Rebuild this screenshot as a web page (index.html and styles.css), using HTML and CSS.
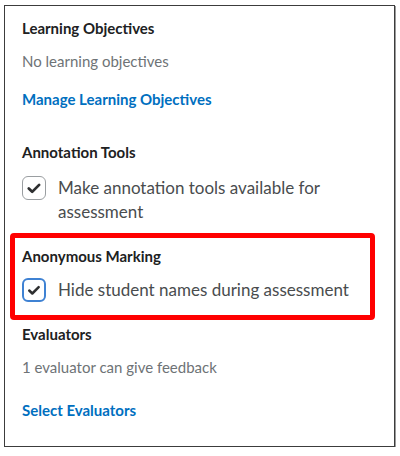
FILE: index.html
```html
<!DOCTYPE html>
<html lang="en">
<head>
  <meta charset="UTF-8" />
  <meta name="viewport" content="width=device-width,initial-scale=1" />
  <title>Assignment Evaluation</title>
  <link rel="stylesheet" href="styles.css">
</head>
<body>

  <div class="panel">
    <section class="group">
      <h2>Learning Objectives</h2>
      <p class="muted">No learning objectives</p>
      <a class="link link-first" href="#">Manage Learning Objectives</a>
    </section>

    <section class="group group-annotation">
      <h2>Annotation Tools</h2>
      <label class="check">
        <span class="box">
          <svg viewBox="0 0 24 24" width="24" height="24"><path d="M6.3 12.6 L10 16.2 L17.6 8.6" /></svg>
        </span>
        <span class="check-text">Make annotation tools available for assessment</span>
      </label>
    </section>

    <section class="group highlight">
      <h2>Anonymous Marking</h2>
      <label class="check">
        <span class="box box-focus">
          <svg viewBox="0 0 24 24" width="24" height="24"><path d="M6.3 12.6 L10 16.2 L17.6 8.6" /></svg>
        </span>
        <span class="check-text">Hide student names during assessment</span>
      </label>
    </section>

    <section class="group group-evaluators">
      <h2>Evaluators</h2>
      <p class="muted">1 evaluator can give feedback</p>
      <a class="link link-last" href="#">Select Evaluators</a>
    </section>
  </div>

</body>
</html>
```

FILE: styles.css
```css
body {
  font-family: Lato, "Noto Sans", sans-serif;
  background: #fff;
  margin: 0;
  padding: 0;
}
.panel {
  margin: 5px 5px 0 4px;
  height: 428px;
  border: 1px solid #3c3c3c;
  box-shadow: 1px 1px 0 #9a9a9a;
  padding-top: 12px;
  box-sizing: content-box;
}
.group {
  padding: 0 17px;
}
.group h2 {
  margin: 0;
  font-size: 15px;
  line-height: 20px;
  font-weight: 700;
  color: #202122;
}
.muted {
  margin: 13px 0 0;
  font-size: 15px;
  line-height: 20px;
  color: #6e7376;
}
.link {
  display: block;
  font-size: 15px;
  line-height: 20px;
  font-weight: 700;
  color: #006fbf;
  text-decoration: none;
}
.link-first {
  margin-top: 18px;
}
.link-last {
  margin-top: 23px;
}
.group-annotation {
  margin-top: 33px;
}
.check {
  display: flex;
  align-items: flex-start;
  gap: 12px;
  margin-top: 14px;
  cursor: pointer;
}
.box {
  flex: none;
  width: 24px;
  height: 24px;
  border: 1.5px solid #9a9ea1;
  border-radius: 6px;
  box-sizing: border-box;
  display: flex;
  align-items: center;
  justify-content: center;
  background: #fff;
}
.box svg {
  width: 22px;
  height: 22px;
}
.box path {
  fill: none;
  stroke: #2e2f30;
  stroke-width: 3;
  stroke-linecap: round;
  stroke-linejoin: round;
}
.box-focus {
  border: 2px solid #3f82d3;
}
.check-text {
  font-size: 17px;
  line-height: 24px;
  color: #494c4e;
}
.highlight {
  margin: 9px 19px 0 5px;
  padding: 7px 7px 13px;
  border: 5px solid #ff0000;
  border-radius: 4px;
}
.highlight h2 {
  padding-top: 1px;
}
.highlight .check {
  margin-top: 12px;
}
.group-evaluators {
  margin-top: 4px;
}
```
